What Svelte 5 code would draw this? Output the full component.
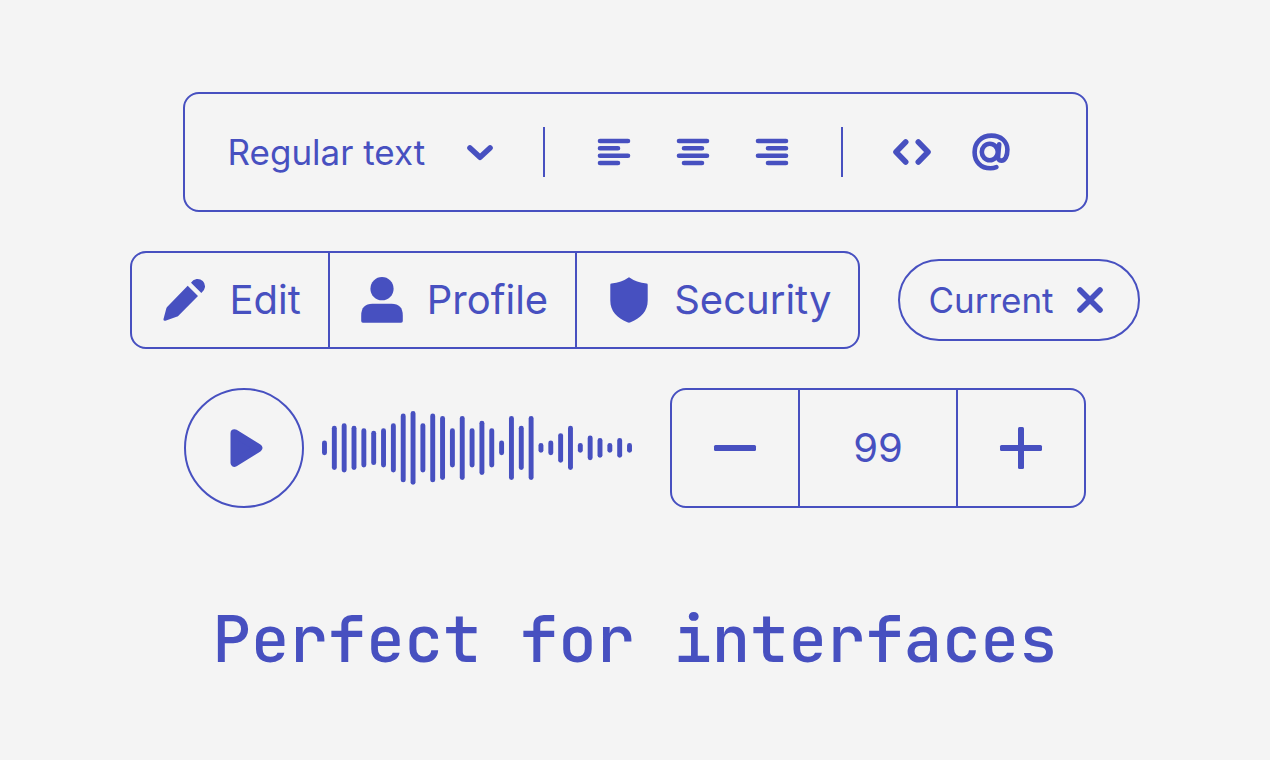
<script lang="ts">
	type Align = "left" | "center" | "right";

	const styles = ["Regular text", "Heading", "Quote"];

	// x start of the short lines in each alignment icon
	const alignments: { id: Align; label: string; start: number }[] = [
		{ id: "left", label: "Align left", start: 6 },
		{ id: "center", label: "Align center", start: 11 },
		{ id: "right", label: "Align right", start: 16 }
	];

	const wave = [
		6, 18, 20, 18, 16, 14, 16, 20, 28, 30, 20, 28, 26, 16, 26, 16,
		22, 16, 6, 26, 18, 26, 4, 6, 12, 18, 4, 10, 8, 4, 8, 4
	];

	let textStyle = $state("Regular text");
	let align = $state<Align>("left");
	let playing = $state(false);
	let amount = $state(99);
	let showCurrent = $state(true);
</script>

<main>
	<div class="toolbar" role="toolbar" aria-label="Text formatting">
		<div class="picker">
			<select bind:value={textStyle} aria-label="Text style">
				{#each styles as style}
					<option>{style}</option>
				{/each}
			</select>
			<svg class="chevron" viewBox="0 0 28 28" aria-hidden="true">
				<path class="line" d="M4 10 14 19.2 24 10" />
			</svg>
		</div>
		<span class="rule"></span>
		<div class="tools">
			{#each alignments as item (item.id)}
				<button type="button" aria-label={item.label} aria-pressed={align === item.id} onclick={() => (align = item.id)}>
					<svg viewBox="0 0 40 40" aria-hidden="true">
						<path class="thin" d="M6 9H34M6 23.7H34" />
						<path class="thin" d="M{item.start} 16.3h18M{item.start} 31h18" />
					</svg>
				</button>
			{/each}
		</div>
		<span class="rule"></span>
		<div class="tools">
			<button type="button" aria-label="Code">
				<svg viewBox="0 0 40 40" aria-hidden="true">
					<path class="line" d="M13.7 10 4 20 13.7 30M26.3 10 36 20 26.3 30" />
				</svg>
			</button>
			<button type="button" aria-label="Mention">
				<svg viewBox="0 0 40 40" aria-hidden="true">
					<path
						class="thin"
						d="M25.4 35.2C23.6 35.9 21.8 36.3 19.5 36.3 9.8 36.3 3.6 29.7 3.6 20.2 3.6 10.6 10.3 3.6 20.5 3.6c9.6 0 15.9 6 15.9 14 0 6.7-2.4 11-6 11-2.5 0-3.5-1.6-3.3-4L28.2 12.3"
					/>
					<ellipse class="thin" cx="18.8" cy="20" rx="8" ry="8.3" />
				</svg>
			</button>
		</div>
	</div>

	<div class="row">
		<div class="segments">
			<button type="button">
				<svg viewBox="0 0 50 50" aria-hidden="true">
					<path d="M28.7 10.7 39 21 19.2 41q-.6.6-1.6.8L6.4 45.8Q4.2 46.2 4.5 44L7.3 33.4q.2-.8.8-1.5ZM32 7.7A7.5 7.5 0 1 1 42.3 17.9Z" />
				</svg>
				Edit
			</button>
			<button type="button">
				<svg viewBox="0 0 50 50" aria-hidden="true">
					<circle cx="25" cy="13.7" r="11.6" />
					<path d="M15.5 28.7h19Q45.8 28.7 45.8 40.5V46q0 1.7-1.7 1.7H5.9Q4.2 47.7 4.2 46V40.5Q4.2 28.7 15.5 28.7Z" />
				</svg>
				Profile
			</button>
			<button type="button">
				<svg viewBox="0 0 50 50" aria-hidden="true">
					<path d="M25 2.3Q32.5 7.6 42.6 8.6 43.7 8.7 43.7 9.8V25.5C43.7 36.5 37 42.5 26.6 47.3Q25 48 23.4 47.3C13 42.5 6.3 36.5 6.3 25.5V9.8Q6.3 8.7 7.4 8.6 17.5 7.6 25 2.3Z" />
				</svg>
				Security
			</button>
		</div>
		{#if showCurrent}
			<div class="chip">
				<span>Current</span>
				<button type="button" aria-label="Remove Current" onclick={() => (showCurrent = false)}>
					<svg viewBox="0 0 40 40" aria-hidden="true">
						<path class="line" d="M10 10 30 30M30 10 10 30" />
					</svg>
				</button>
			</div>
		{/if}
	</div>

	<div class="row">
		<div class="player">
			<button type="button" class="play" aria-label={playing ? "Pause" : "Play"} onclick={() => (playing = !playing)}>
				<svg viewBox="0 0 50 50" aria-hidden="true">
					{#if playing}
						<path d="M13 8h8v34h-8zM29 8h8v34h-8z" />
					{:else}
						<path class="triangle" d="M15.5 10.2 39.3 25 15.5 39.8Z" />
					{/if}
				</svg>
			</button>
			<svg class="wave" viewBox="0 0 126 30" role="img" aria-label="Audio waveform">
				{#each wave as height, i}
					<rect x={i * 4} y={15 - height / 2} width="2" {height} rx="1" />
				{/each}
			</svg>
		</div>
		<div class="stepper" role="group" aria-label="Amount">
			<button type="button" aria-label="Decrease" onclick={() => (amount -= 1)}>
				<svg viewBox="0 0 50 50" aria-hidden="true">
					<rect x="4" y="22" width="42" height="6" rx="1.5" />
				</svg>
			</button>
			<output>{amount}</output>
			<button type="button" aria-label="Increase" onclick={() => (amount += 1)}>
				<svg viewBox="0 0 50 50" aria-hidden="true">
					<rect x="4" y="22" width="42" height="6" rx="1.5" />
					<rect x="22" y="4" width="6" height="42" rx="1.5" />
				</svg>
			</button>
		</div>
	</div>

	<h1>Perfect for interfaces</h1>
</main>

<style>
:global(body) {
	background: #f4f4f4;
}
main {
	box-sizing: border-box;
	display: flex;
	flex-direction: column;
	align-items: center;
	gap: 39px;
	min-height: 100vh;
	padding: 92px 24px 40px;
	color: #4750c0;
	font-family: Inter, sans-serif;
	font-size: 35px;
	line-height: 50px;
}
button,
select {
	margin: 0;
	padding: 0;
	border: none;
	background: none;
	color: inherit;
	font: inherit;
	cursor: pointer;
}
svg {
	display: block;
	flex: none;
	fill: currentColor;
}
.line,
.thin,
.triangle {
	stroke: currentColor;
	stroke-linecap: round;
	stroke-linejoin: round;
}
.line {
	fill: none;
	stroke-width: 5.6;
}
.thin {
	fill: none;
	stroke-width: 4.6;
}
.triangle {
	stroke-width: 8;
}

.toolbar {
	display: flex;
	align-items: center;
	gap: 49px;
	padding: 33px 75px 33px 43px;
	border: 2px solid;
	border-radius: 16px;
}
.picker {
	display: grid;
	align-items: center;
}
.picker select,
.chevron {
	grid-area: 1 / 1;
}
.picker select {
	appearance: none;
	padding-right: 68px;
}
.chevron {
	justify-self: end;
	width: 28px;
	pointer-events: none;
}
.rule {
	align-self: stretch;
	width: 2px;
	background: currentColor;
}
.tools {
	display: flex;
	align-items: center;
	gap: 39px;
}
.tools svg,
.chip svg {
	width: 40px;
}

.row {
	display: flex;
	align-items: center;
	gap: 38px;
}
.segments,
.stepper {
	display: flex;
	border: 2px solid;
	border-radius: 16px;
	font-size: 40px;
}
.segments button {
	display: flex;
	align-items: center;
	gap: 20px;
	padding: 22px 27px;
}
.segments button + button,
.stepper * + * {
	border-left: 2px solid;
}
.segments svg,
.play svg,
.stepper svg {
	width: 50px;
	border: none;
}

.chip {
	display: flex;
	align-items: center;
	gap: 16px;
	padding: 14px 28px;
	border: 2px solid;
	border-radius: 48px;
}

.player {
	display: flex;
	align-items: center;
	gap: 18px;
}
.play {
	padding: 33px;
	border: 2px solid;
	border-radius: 50%;
}
.wave {
	width: 310px;
}
.stepper button {
	padding: 33px 38px;
}
.stepper output {
	display: flex;
	align-items: center;
	justify-content: center;
	min-width: 156px;
}

h1 {
	margin: 52px 0 0;
	font-family: "JetBrains Mono", "DejaVu Sans Mono", monospace;
	font-size: 64px;
	font-weight: 500;
	line-height: 80px;
}
</style>
